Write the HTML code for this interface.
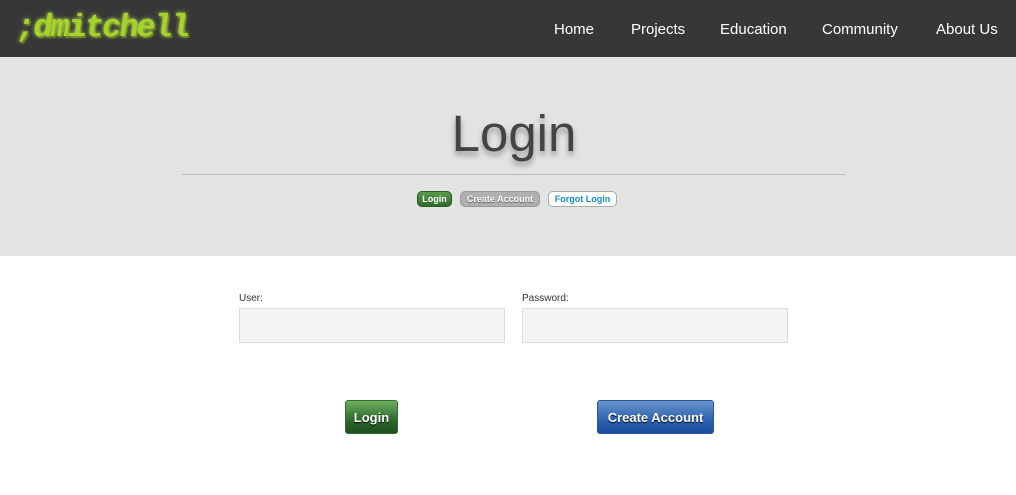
<!DOCTYPE html>
<html><head><meta charset="utf-8"><style>
*{margin:0;padding:0;box-sizing:border-box}
body{width:1016px;height:495px;background:#fff;font-family:"Liberation Sans",sans-serif;overflow:hidden;position:relative}
.nav{position:absolute;left:0;top:0;width:1016px;height:57px;background:#373737}
.logo{position:absolute;left:16px;top:11px;font:bold 32px/34px "Liberation Mono",monospace;color:#a6d32a;letter-spacing:-2px;text-shadow:0 0 4px #bde060,2px 2px 0 #556b15;transform:skewX(-8deg)}
.nav a{position:absolute;top:21px;color:#fff;font-size:15px;text-decoration:none}
.hero{position:absolute;left:0;top:57px;width:1016px;height:199px;background:#e3e3e3}
h1{position:absolute;left:0;width:1028px;top:104px;text-align:center;font-weight:normal;font-size:51px;color:#444;text-shadow:0 4px 6px rgba(0,0,0,.35)}
.hr{position:absolute;left:182px;top:174px;width:663px;height:1px;background:#bbb}
.sb{position:absolute;top:191px;height:16px;border-radius:5px;font:bold 9px "Liberation Sans",sans-serif;line-height:14px;text-align:center}
label{position:absolute;top:293px;font-size:10px;color:#333}
.in{position:absolute;top:308px;width:266px;height:35px;background:#f4f4f4;border:1px solid #ddd}
.bb{position:absolute;top:400px;height:34px;border-radius:3px;color:#fff;font-weight:bold;font-size:13px;line-height:34px;text-align:center;text-shadow:0 1px 1px #000}
</style></head><body>
<div class="nav">
<div class="logo">;dmitchell</div>
<a style="left:554px">Home</a><a style="left:631px">Projects</a><a style="left:720px">Education</a><a style="left:822px">Community</a><a style="left:936px">About Us</a>
</div>
<div class="hero"></div>
<h1>Login</h1>
<div class="hr"></div>
<div class="sb" style="left:417px;width:35px;background:linear-gradient(#5c9a4c,#2e6a2a);color:#fff;border:1px solid #2b5a25">Login</div>
<div class="sb" style="left:460px;width:80px;background:#b0b0b0;color:#fff;border:1px solid #999;text-shadow:0 1px 1px #555">Create Account</div>
<div class="sb" style="left:548px;width:69px;background:#fff;color:#1a8ad4;border:1px solid #aaa">Forgot Login</div>
<label style="left:239px">User:</label><label style="left:522px">Password:</label>
<div class="in" style="left:239px"></div><div class="in" style="left:522px"></div>
<div class="bb" style="left:345px;width:53px;background:linear-gradient(#6fae5e,#2a6a2a 60%,#1e4e1e);border:1px solid #3a6a34">Login</div>
<div class="bb" style="left:597px;width:117px;background:linear-gradient(#6c94cc,#2a62b0 60%,#1a4f9c);border:1px solid #2a5599">Create Account</div>
</body></html>
